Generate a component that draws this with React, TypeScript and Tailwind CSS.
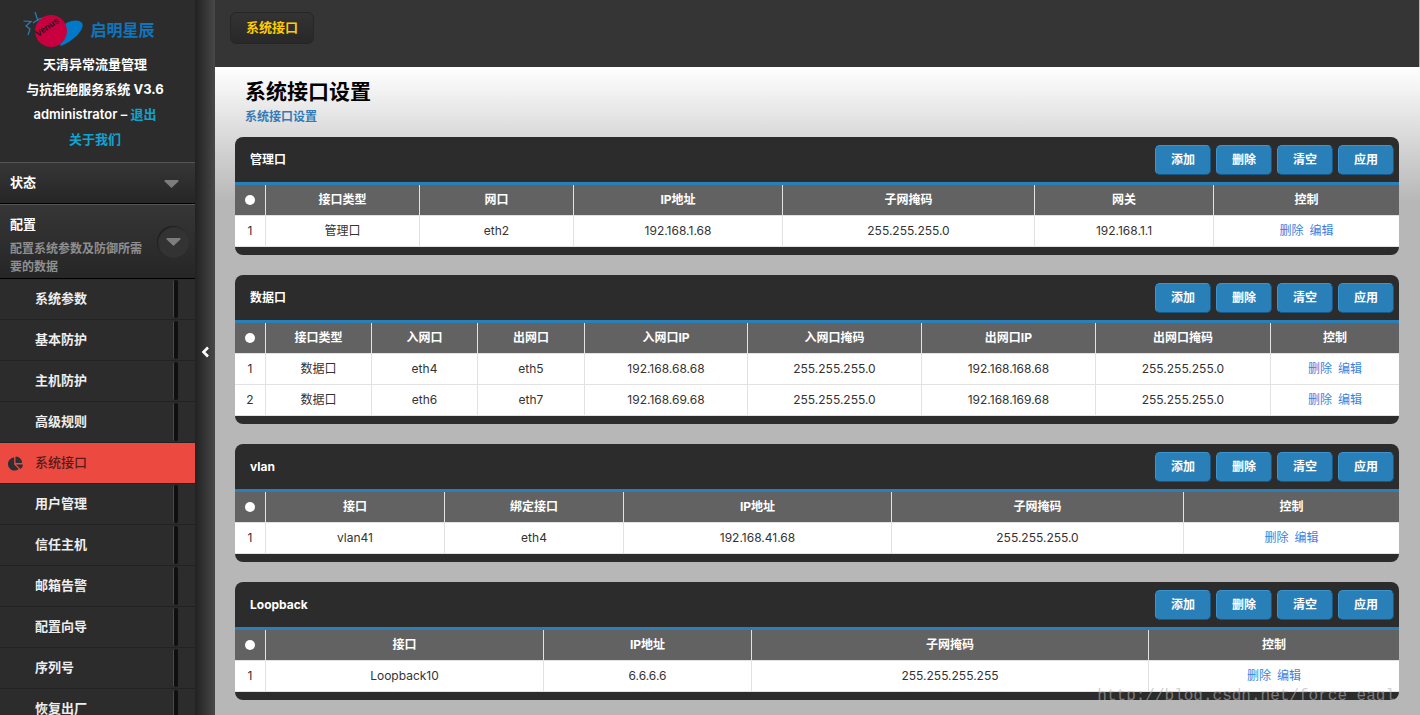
import React from 'react';
import { FaChartPie } from 'react-icons/fa';

interface Column {
  label: string;
  weight: number;
}

interface Panel {
  title: string;
  columns: Column[];
  rows: string[][];
  watermark?: string;
}

const menuItems = [
  '系统参数', '基本防护', '主机防护', '高级规则', '系统接口', '用户管理',
  '信任主机', '邮箱告警', '配置向导', '序列号', '恢复出厂',
];

const activeItem = '系统接口';

const panelActions = ['添加', '删除', '清空', '应用'];

const panels: Panel[] = [
  {
    title: '管理口',
    columns: [
      { label: '接口类型', weight: 154 },
      { label: '网口', weight: 154 },
      { label: 'IP地址', weight: 209 },
      { label: '子网掩码', weight: 252 },
      { label: '网关', weight: 179 },
      { label: '控制', weight: 185 },
    ],
    rows: [['管理口', 'eth2', '192.168.1.68', '255.255.255.0', '192.168.1.1']],
  },
  {
    title: '数据口',
    columns: [
      { label: '接口类型', weight: 106 },
      { label: '入网口', weight: 106 },
      { label: '出网口', weight: 107 },
      { label: '入网口IP', weight: 163 },
      { label: '入网口掩码', weight: 174 },
      { label: '出网口IP', weight: 174 },
      { label: '出网口掩码', weight: 175 },
      { label: '控制', weight: 128 },
    ],
    rows: [
      ['数据口', 'eth4', 'eth5', '192.168.68.68', '255.255.255.0', '192.168.168.68', '255.255.255.0'],
      ['数据口', 'eth6', 'eth7', '192.168.69.68', '255.255.255.0', '192.168.169.68', '255.255.255.0'],
    ],
  },
  {
    title: 'vlan',
    columns: [
      { label: '接口', weight: 179 },
      { label: '绑定接口', weight: 179 },
      { label: 'IP地址', weight: 268 },
      { label: '子网掩码', weight: 292 },
      { label: '控制', weight: 215 },
    ],
    rows: [['vlan41', 'eth4', '192.168.41.68', '255.255.255.0']],
  },
  {
    title: 'Loopback',
    columns: [
      { label: '接口', weight: 278 },
      { label: 'IP地址', weight: 208 },
      { label: '子网掩码', weight: 397 },
      { label: '控制', weight: 250 },
    ],
    rows: [['Loopback10', '6.6.6.6', '255.255.255.255']],
    watermark: 'http://blog.csdn.net/force_eagl',
  },
];

const INDEX_WEIGHT = 31;

const Logo: React.FC = () => (
  <div className="flex h-9 items-center justify-center gap-[6px] pr-3">
    <svg width="61" height="38" viewBox="0 0 61 38" aria-hidden="true">
      <path d="M42 13 C50 8 58 9 59.500 13 C61 19 50 31 37 35 Z" fill="#0079c9" />
      <g fill="none" stroke="#2a7fb4" strokeWidth="1.2">
        <path d="M0.500 10 L8 10.500 L3 15 L7 18 L5 24" />
        <path d="M12 1 L15 10" />
        <path d="M10 12 L16 8 L24 6" />
      </g>
      <circle cx="28" cy="20" r="16" fill="#c80040" />
      <text
        x="15"
        y="26"
        transform="rotate(-35 15 26)"
        fontFamily="Liberation Sans, sans-serif"
        fontSize="9"
        fontWeight="700"
        fill="#2a1420"
      >
        Venus
      </text>
    </svg>
    <span className="text-[16px] font-bold text-[#0f75bd]">启明星辰</span>
  </div>
);

const Triangle: React.FC = () => (
  <svg width="15" height="9" viewBox="0 0 15 9" aria-hidden="true">
    <path d="M1 1 H14 Q15 1.500 14.300 2.500 L7.500 9 L0.700 2.500 Q0 1.500 1 1 Z" fill="#7d7d7d" />
  </svg>
);

const Sidebar: React.FC = () => (
  <aside className="w-[195px] shrink-0 bg-[#2c2c2c] text-[13px] font-bold text-white">
    <div className="pt-3 pr-[5px] pb-[10px] text-center leading-[25px]">
      <Logo />
      <div className="pt-1">
        <p>天清异常流量管理</p>
        <p>与抗拒绝服务系统 V3.6</p>
        <p className="font-semibold">
          administrator – <a href="#logout" className="text-[#0ea5d2]">退出</a>
        </p>
        <p>
          <a href="#about" className="text-[#0ea5d2]">关于我们</a>
        </p>
      </div>
    </div>

    <button className="flex h-[42px] w-full items-center justify-between border-t border-b border-t-[#555] border-b-black bg-linear-to-b from-[#363636] to-[#262626] pr-4 pl-[10px] text-left">
      <span>状态</span>
      <Triangle />
    </button>

    <button className="flex h-[75px] w-full items-center justify-between border-t border-b border-t-[#555] border-b-black bg-linear-to-b from-[#363636] to-[#262626] pr-[6px] pl-[10px] text-left">
      <span className="w-[135px] pt-1">
        <span className="block leading-6">配置</span>
        <span className="block pt-1 text-xs leading-[18px] text-[#8f8f8f]">配置系统参数及防御所需要的数据</span>
      </span>
      <span className="flex size-8 items-center justify-center rounded-full bg-[#333] shadow-[inset_1px_1px_1px_#1e1e1e]">
        <Triangle />
      </span>
    </button>

    <nav>
      {menuItems.map((item) =>
        item === activeItem ? (
          <a
            key={item}
            href="#interface"
            className="flex h-[41px] items-center border-b border-[#222] bg-[#ec4a41] pl-2 font-medium text-[#571b19]"
          >
            <FaChartPie className="mr-3 size-[15px] text-[#2c2f33]" />
            {item}
          </a>
        ) : (
          <a
            key={item}
            href="#menu"
            className="flex h-[41px] items-center justify-between border-b border-[#222] pr-[17px] pl-[35px] text-[#eee]"
          >
            {item}
            <span className="h-[38px] w-[5px] rounded-xs border-l border-[#484848] bg-[#0f0f0f]" />
          </a>
        )
      )}
    </nav>
  </aside>
);

const DataPanel: React.FC<{ panel: Panel }> = ({ panel }) => {
  const total = panel.columns.reduce((sum, c) => sum + c.weight, INDEX_WEIGHT);
  const percent = (weight: number) => `${(weight / total) * 100}%`;

  return (
    <section className="relative rounded-lg bg-[#2c2c2c] pb-2 text-xs">
      <div className="flex h-12 items-center justify-between border-b-3 border-[#2980b9] pr-[5px] pl-[15px]">
        <h2 className="font-bold text-white">{panel.title}</h2>
        <div className="flex gap-[5px]">
          {panelActions.map((action) => (
            <button
              key={action}
              className="h-[30px] w-14 rounded-[5px] border border-t-[#3a94cf] border-r-[#14598a] border-b-[#14598a] border-l-[#3a94cf] bg-[#2980b9] font-bold text-white"
            >
              {action}
            </button>
          ))}
        </div>
      </div>

      <table className="w-full table-fixed border-separate border-spacing-0 text-center">
        <colgroup>
          <col style={{ width: percent(INDEX_WEIGHT) }} />
          {panel.columns.map((c) => (
            <col key={c.label} style={{ width: percent(c.weight) }} />
          ))}
        </colgroup>
        <thead>
          <tr className="h-[31px] bg-[#626262] text-white">
            <th className="border-r border-b border-[#e2e2e2] p-0" aria-label="#">
              <span className="mx-auto block size-[10px] rounded-full bg-white" />
            </th>
            {panel.columns.map((c) => (
              <th key={c.label} className="border-r border-b border-[#e2e2e2] p-0 font-bold last:border-r-0">
                {c.label}
              </th>
            ))}
          </tr>
        </thead>
        <tbody>
          {panel.rows.map((row, index) => (
            <tr key={index} className="h-[31px] bg-white text-[#333]">
              <td className="border-r border-b border-[#e2e2e2] p-0">{index + 1}</td>
              {row.map((cell, i) => (
                <td key={i} className="border-r border-b border-[#e2e2e2] p-0">{cell}</td>
              ))}
              <td className="border-b border-[#e2e2e2] p-0">
                <div className="flex justify-center gap-[6px] text-[#3d7fe0]">
                  <a href="#delete">删除</a>
                  <a href="#edit">编辑</a>
                </div>
              </td>
            </tr>
          ))}
        </tbody>
      </table>

      {panel.watermark && (
        <span className="absolute right-1 -bottom-2 font-['Liberation_Mono',monospace] text-base leading-6 text-[#b4b4b4]/60">
          {panel.watermark}
        </span>
      )}
    </section>
  );
};

const App: React.FC = () => {
  return (
    <div className="flex h-screen overflow-hidden bg-[#b7b7b7] font-[Inter,'Noto_Sans_CJK_SC',sans-serif]">
      <Sidebar />

      {/* Collapse handle */}
      <button
        aria-label="collapse"
        className="flex w-5 shrink-0 items-center justify-center bg-linear-to-r from-[#222] to-[#484848] pb-3"
      >
        <svg width="8" height="12" viewBox="0 0 8 12" aria-hidden="true">
          <path d="M7 1.500 L2.500 6 L7 10.500" fill="none" stroke="#fff" strokeWidth="2.6" />
        </svg>
      </button>

      <main className="min-w-0 flex-1">
        <header className="mr-px h-[67px] bg-[#353535] px-[15px] pt-3">
          <button className="h-8 rounded-md border border-[#262626] bg-linear-to-b from-[#333] to-[#282828] px-[15px] text-[13px] font-bold text-[#fc0]">
            系统接口
          </button>
        </header>

        <div className="bg-linear-to-b from-white to-[#b7b7b7] to-[135px] pr-[21px] pl-5">
          <div className="pt-[9px] pb-[10px] pl-[10px]">
            <h1 className="text-[21px] leading-[31px] font-bold text-black">系统接口设置</h1>
            <p className="text-xs leading-5 font-bold text-[#337ab7]">系统接口设置</p>
          </div>
          <div className="flex flex-col gap-5 pb-5">
            {panels.map((panel) => (
              <DataPanel key={panel.title} panel={panel} />
            ))}
          </div>
        </div>
      </main>
    </div>
  );
};

export default App;
